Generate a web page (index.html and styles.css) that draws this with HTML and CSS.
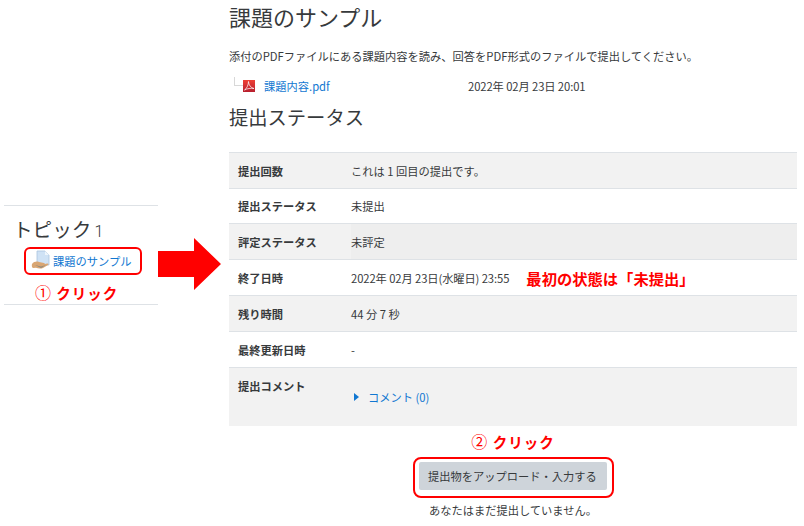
FILE: index.html
```html
<!DOCTYPE html>
<html lang="ja">
<head>
<meta charset="utf-8">
<title>課題のサンプル</title>
<link rel="stylesheet" href="styles.css">
</head>
<body>
<div class="page">
  <aside class="side">
    <h3 class="topic">トピック<span class="topic-num">1</span></h3>
    <div class="activity">
      <svg class="assign-icon" width="20" height="20" viewBox="0 0 20 20"><path d="M6 1h8l4 4v10H6z" fill="#cfe2f5" stroke="#a9c4de" stroke-width=".8"/><path d="M14 1v4h4z" fill="#eef5fb"/><path d="M1 14c2-2.500 5-3 7-2l5 1c1 .3 1 1.500 0 1.600l-2 .2 5-1.300c1.500-.3 2 .8 1 1.500l-5 3c-2 .8-5 .6-7-.2l-3 .2C1 18 .5 15.500 1 14z" fill="#d9a673"/><path d="M4 15l6 1.500 5-1.500-5 3z" fill="#8f8a80"/></svg>
      <a class="link">課題のサンプル</a>
    </div>
    <div class="step step-one"><span class="num">①</span> クリック</div>
  </aside>
  <svg class="arrow" width="63" height="52" viewBox="0 0 63 52"><path d="M0 13h36V0l27 26-27 26V39H0z" fill="#ff0000"/></svg>
  <main class="main">
    <h2 class="title">課題のサンプル</h2>
    <p class="intro">添付のPDFファイルにある課題内容を読み、回答をPDF形式のファイルで提出してください。</p>
    <div class="file">
      <span class="tree"></span>
      <svg class="pdf" width="12" height="12" viewBox="0 0 12 12"><defs><linearGradient id="pdfRed" x1="0" y1="0" x2="0" y2="1"><stop offset="0" stop-color="#ee4035"/><stop offset="1" stop-color="#b81f2e"/></linearGradient></defs><rect width="12" height="12" fill="url(#pdfRed)"/><path d="M1.500 10C3.500 9 5.500 5 5.500 1.500 5.500 5 8 8 11 8.500 8 8 4 8.500 1.500 10z" fill="none" stroke="#fff" stroke-width=".7"/></svg>
      <a class="link file-name">課題内容.pdf</a>
      <span class="file-date date">2022年 02月 23日 20:01</span>
    </div>
    <h2 class="status-title">提出ステータス</h2>
    <div class="table">
      <div class="row odd"><div class="th">提出回数</div><div class="td">これは 1 回目の提出です。</div></div>
      <div class="row short"><div class="th">提出ステータス</div><div class="td">未提出</div></div>
      <div class="row odd alt"><div class="th">評定ステータス</div><div class="td">未評定</div></div>
      <div class="row"><div class="th">終了日時</div><div class="td date">2022年 02月 23日(水曜日) 23:55</div><div class="note">最初の状態は「未提出」</div></div>
      <div class="row odd"><div class="th">残り時間</div><div class="td">44 分 7 秒</div></div>
      <div class="row"><div class="th">最終更新日時</div><div class="td">-</div></div>
      <div class="row odd tall"><div class="th">提出コメント</div><div class="td comment"><span class="caret"></span><a class="link">コメント (0)</a></div></div>
    </div>
    <div class="actions">
      <div class="step step-two"><span class="num">②</span> クリック</div>
      <div class="btn-ring"><button class="btn">提出物をアップロード・入力する</button></div>
      <p class="hint">あなたはまだ提出していません。</p>
    </div>
  </main>
</div>
</body>
</html>
```
FILE: styles.css
```css
* { box-sizing: border-box; }
html, body { margin: 0; padding: 0; background: #fff; }
body {
  width: 804px; height: 526px; overflow: hidden;
  font-family: "Noto Sans CJK JP", "Noto Sans", sans-serif;
  font-size: 11.25px; color: #373a3c;
  text-spacing-trim: space-all;
}
.page { display: flex; align-items: flex-start; height: 526px; padding-left: 4px; }
.side {
  width: 154px; height: 100px; margin-top: 205px; flex: none;
  border-top: 1px solid #dee2e6; border-bottom: 1px solid #dee2e6;
  padding-top: 10px;
}
.topic { margin: 0 0 0 9px; font-weight: 400; font-size: 19.6px; line-height: 26px; color: #373a3c; }
.topic-num { font-family: Roboto, sans-serif; font-weight: 300; font-size: 16px; margin-left: 3px; }
.activity {
  display: flex; align-items: center; gap: 2px;
  width: 118px; height: 28px; margin: 2px 0 0 20px; padding-left: 5px;
  border: 2px solid #f00; border-radius: 6px;
}
.assign-icon { flex: none; margin-top: -3px; }
.link { color: #1177d1; text-decoration: none; }
.step { color: #f00; font-weight: 700; font-size: 14.5px; line-height: 20px; letter-spacing: 1px; white-space: nowrap; }
.step-one { margin: 7px 0 0 31px; }
.num { font-weight: 400; font-size: 16px; }
.arrow { flex: none; margin-top: 238px; }
.main { width: 568px; margin-left: 8px; flex: none; }
.title { margin: -2px 0 0; font-weight: 400; font-size: 22px; line-height: 36px; color: #373a3c; }
.intro { margin: 13px 0 0; line-height: 18px; }
.file { display: flex; align-items: center; height: 18px; margin-top: 12px; }
.tree { width: 9px; height: 9px; margin: -9px 0 0 5px; border-left: 1px solid #d8d8d8; border-bottom: 1px solid #d8d8d8; flex: none; }
.pdf { flex: none; }
.file-name { margin-left: 9px; width: 204px; }
.file-date { white-space: nowrap; }
.date { letter-spacing: -.1px; }
.status-title { margin: 6px 0 0; font-weight: 400; font-size: 19.3px; line-height: 32px; }
.table { margin-top: 19px; border-top: 1px solid #dee2e6; }
.row { display: flex; height: 36px; border-bottom: 1px solid #dee2e6; align-items: center; }
.short { height: 35px; }
.odd { background: #f2f2f2; }
.alt { background: #eeeeee; }
.alt .th { align-self: stretch; display: flex; align-items: center; background: #f2f2f2; }
.tall { height: 58px; align-items: flex-start; border-bottom: 0; padding-top: 10px; }
.th { width: 122px; padding-left: 9px; font-weight: 700; flex: none; }
.td { flex: none; }
.note { color: #f00; font-weight: 700; font-size: 15.3px; margin-left: 17px; }
.comment { display: flex; align-items: center; margin-top: 11px; padding-left: 3px; }
.caret { width: 0; height: 0; margin-right: 9px; border-left: 5px solid #1177d1; border-top: 4px solid transparent; border-bottom: 4px solid transparent; }
.actions { display: flex; flex-direction: column; align-items: center; padding-top: 5px; }
.step-two { margin-bottom: 5px; }
.btn-ring { border: 2px solid #f00; border-radius: 8px; padding: 3px 5px 6px 4px; }
.btn { display: block; width: 188px; height: 28px; border: 0; border-radius: 2px; background: #ced4da; color: #373a3c; font: inherit; padding: 0; }
.hint { margin: 3px 0 0; line-height: 18px; }
```
